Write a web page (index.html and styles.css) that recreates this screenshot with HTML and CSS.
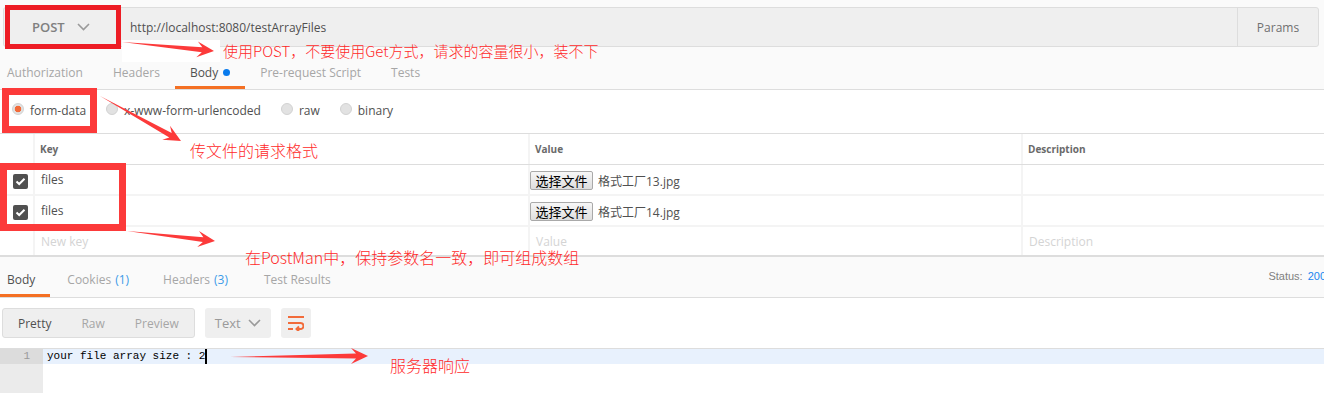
FILE: index.html
```html
<!DOCTYPE html>
<html lang="zh-CN">
<head>
    <meta charset="UTF-8">
    <meta name="viewport" content="width=device-width, initial-scale=1.0">
    <title>testArrayFiles</title>
    <link rel="stylesheet" href="styles.css">
</head>
<body>
    <!-- request url -->
    <div class="url-bar">
        <div class="method">POST
            <svg class="chevron" width="13" height="8" viewBox="0 0 13 8"><polyline points="1,1 6.5,6.5 12,1"/></svg>
        </div>
        <div class="url">http://localhost:8080/testArrayFiles</div>
        <div class="params">Params</div>
    </div>

    <div class="tabs req-tabs">
        <div class="tab first">Authorization</div>
        <div class="tab">Headers</div>
        <div class="tab active">Body <span class="dot"></span></div>
        <div class="tab">Pre-request Script</div>
        <div class="tab">Tests</div>
    </div>

    <div class="body-types">
        <div class="opt"><span class="radio checked"></span>form-data</div>
        <div class="opt"><span class="radio"></span>x-www-form-urlencoded</div>
        <div class="opt"><span class="radio"></span>raw</div>
        <div class="opt"><span class="radio"></span>binary</div>
    </div>

    <!-- form-data table -->
    <div class="kv">
        <div class="kv-row kv-head">
            <div class="cell check"></div>
            <div class="cell">Key</div>
            <div class="cell">Value</div>
            <div class="cell">Description</div>
        </div>
        <div class="kv-row">
            <div class="cell check"><span class="checkbox"><svg width="15" height="15" viewBox="0 0 15 15"><polyline points="3.5,7.5 6.2,10 11.5,4.8"/></svg></span></div>
            <div class="cell">files</div>
            <div class="cell value"><button class="file-btn">选择文件</button><span class="file-name">格式工厂13.jpg</span></div>
            <div class="cell"></div>
        </div>
        <div class="kv-row">
            <div class="cell check"><span class="checkbox"><svg width="15" height="15" viewBox="0 0 15 15"><polyline points="3.5,7.5 6.2,10 11.5,4.8"/></svg></span></div>
            <div class="cell">files</div>
            <div class="cell value"><button class="file-btn">选择文件</button><span class="file-name">格式工厂14.jpg</span></div>
            <div class="cell"></div>
        </div>
        <div class="kv-row">
            <div class="cell check"></div>
            <div class="cell placeholder">New key</div>
            <div class="cell placeholder">Value</div>
            <div class="cell placeholder">Description</div>
        </div>
    </div>

    <!-- response -->
    <div class="tabs res-tabs">
        <div class="tab first active">Body</div>
        <div class="tab">Cookies <span class="count">(1)</span></div>
        <div class="tab">Headers <span class="count">(3)</span></div>
        <div class="tab last">Test Results</div>
        <div class="status">Status: <span class="code">200</span></div>
    </div>

    <div class="res-toolbar">
        <div class="segmented">
            <span class="seg active">Pretty</span>
            <span class="seg">Raw</span>
            <span class="seg">Preview</span>
        </div>
        <div class="format">Text
            <svg class="chevron" width="13" height="8" viewBox="0 0 13 8"><polyline points="1,1 6.5,6.5 12,1"/></svg>
        </div>
        <div class="wrap-btn">
            <svg width="16" height="16" viewBox="0 0 16 16">
                <path d="M0 2 H16 M0 8 H12.5 A3 3 0 0 1 12.5 14 H8.5 M0 14 H5"/>
                <polyline points="11,11.5 8.5,14 11,16.5"/>
            </svg>
        </div>
    </div>

    <div class="editor">
        <div class="gutter"><div class="ln current">1</div></div>
        <div class="code"><div class="line current">your file array size : 2<span class="cursor"></span></div></div>
    </div>

    <!-- red notes drawn on the screenshot -->
    <div class="marks">
        <div class="patch"></div>
        <div class="box box-method"></div>
        <div class="box box-type"></div>
        <div class="box box-keys"></div>
        <svg class="arrows" width="1324" height="393">
            <polygon points="122,42 202.3,47.3 197.9,41.4 214,51 196.3,57.3 201.8,52.3"/>
            <polygon points="100,96 171.7,133 170,125.8 181,141 162.3,139.7 169.3,137.4"/>
            <polygon points="127,231 203.4,237.2 199,231.1 215,241 197.2,247 202.8,242.1"/>
            <polygon points="230,357 356,353.6 351,348.1 368,356 351,364.1 356,358.6"/>
        </svg>
        <div class="note note-1">使用POST，不要使用Get方式，请求的容量很小，装不下</div>
        <div class="note note-2">传文件的请求格式</div>
        <div class="note note-3">在PostMan中，保持参数名一致，即可组成数组</div>
        <div class="note note-4">服务器响应</div>
    </div>
</body>
</html>
```

FILE: styles.css
```css
body {
    margin: 0;
    width: 1324px;
    height: 393px;
    overflow: hidden;
    position: relative;
    background-color: #fafafa;
    font-family: "Open Sans", "Noto Sans CJK SC", sans-serif;
    font-size: 12px;
    color: #505050;
}

.chevron polyline {
    fill: none;
    stroke: #9a9a9a;
    stroke-width: 1.6;
}

/* url bar */
.url-bar {
    display: flex;
    height: 38px;
    margin: 7px 5px 0 3px;
    border: 1px solid #ddd;
    border-radius: 3px;
    background-color: #efefef;
}

.method {
    display: flex;
    align-items: center;
    gap: 12px;
    width: 116px;
    padding-left: 28px;
    box-sizing: border-box;
    font-size: 13px;
    font-weight: 600;
    color: #808080;
}

.url {
    flex: 1;
    display: flex;
    align-items: center;
    padding-left: 10px;
}

.params {
    width: 80px;
    display: flex;
    align-items: center;
    justify-content: center;
    border-left: 1px solid #ddd;
    color: #707070;
}

/* tabs */
.tabs {
    display: flex;
    border-bottom: 1px solid #ddd;
    background-color: #fafafa;
}

.req-tabs {
    height: 33px;
    padding-top: 9px;
}

.res-tabs {
    height: 36px;
    padding-top: 4px;
    border-top: 1px solid #ddd;
}

.tab {
    position: relative;
    display: flex;
    align-items: center;
    padding: 0 15px;
    color: #a6a6a6;
}

.res-tabs .tab {
    padding: 0 17px;
}

.res-tabs .tab.last {
    padding-left: 19px;
}

.tabs .tab.first {
    padding-left: 7px;
    padding-right: 15px;
}

.tab.active {
    color: #505050;
}

.tab.active::after {
    content: "";
    position: absolute;
    left: 0;
    right: 0;
    bottom: 0;
    height: 3px;
    background-color: #f47023;
}

.res-tabs .tab.first.active::after {
    left: -7px;
}

.dot {
    display: inline-block;
    width: 7px;
    height: 7px;
    margin-left: 5px;
    border-radius: 50%;
    background-color: #097bed;
}

.count {
    margin-left: 4px;
    color: #3d9ae8;
}

.status {
    margin-left: auto;
    margin-right: -2px;
    display: flex;
    align-items: center;
    padding-bottom: 6px;
    font-family: "Liberation Sans", Arial, sans-serif;
    font-size: 11px;
    color: #808080;
}

.status .code {
    margin-left: 5px;
    color: #1a86f0;
}

/* body type radios */
.body-types {
    display: flex;
    align-items: center;
    gap: 20px;
    height: 43px;
    padding-left: 12px;
    background-color: #fff;
}

.opt {
    display: flex;
    align-items: center;
    gap: 6px;
    margin-top: -3px;
}

.radio {
    width: 12px;
    height: 12px;
    margin-top: -3px;
    border-radius: 50%;
    box-sizing: border-box;
    border: 1px solid #d2d2d2;
    background-color: #e2e2e2;
}

.radio.checked {
    background: radial-gradient(circle, #f26b3a 0 3px, #e2e2e2 3.6px);
}

/* key / value table */
.kv {
    background-color: #fff;
    border-top: 1px solid #ddd;
    border-bottom: 1px solid #ddd;
}

.kv-row {
    display: grid;
    grid-template-columns: 33px 495px 493px 1fr;
    height: 29px;
    border-bottom: 2px solid #f4f4f4;
}

.kv-row:last-child {
    height: 28px;
    border-bottom: none;
}

.kv-head {
    height: 30px;
    border-bottom: 1px solid #ddd;
    font-size: 10px;
    font-weight: 700;
    color: #6a6a6a;
}

.cell {
    display: flex;
    align-items: center;
    padding-left: 6px;
    border-left: 2px solid #f4f4f4;
}

.kv-head .cell {
    padding-left: 5px;
}

.cell.check {
    border-left: none;
    padding-left: 13px;
}

.cell.value {
    padding-left: 0;
}

.placeholder {
    color: #d4d4d4;
}

.checkbox {
    width: 15px;
    height: 15px;
    margin-top: 3px;
    border-radius: 2px;
    background-color: #505050;
}

.checkbox svg {
    display: block;
}

.checkbox polyline {
    fill: none;
    stroke: #fff;
    stroke-width: 2;
}

.file-btn {
    height: 19px;
    width: 63px;
    margin-top: 2px;
    padding: 0;
    border: 1px solid #a9a9a9;
    border-radius: 2px;
    background: linear-gradient(#f7f7f7, #dedede);
    font-family: "Noto Sans CJK SC", sans-serif;
    font-size: 13px;
    line-height: 17px;
    color: #000;
}

.file-name {
    margin: 3px 0 0 5px;
}

/* response toolbar */
.res-toolbar {
    display: flex;
    gap: 10px;
    height: 40px;
    padding: 10px 0 0 2px;
    background-color: #fff;
}

.segmented {
    display: flex;
    height: 28px;
    border: 1px solid #ddd;
    border-radius: 3px;
    background-color: #efefef;
}

.seg {
    display: flex;
    align-items: center;
    padding: 0 15px;
    color: #a6a6a6;
}

.seg.active {
    color: #505050;
}

.format {
    display: flex;
    align-items: center;
    gap: 7px;
    height: 30px;
    padding: 0 10px;
    border-radius: 3px;
    background-color: #efefef;
    font-size: 13px;
    color: #9a9a9a;
}

.wrap-btn {
    display: flex;
    align-items: center;
    justify-content: center;
    width: 30px;
    height: 30px;
    border-radius: 3px;
    background-color: #efefef;
}

.wrap-btn path,
.wrap-btn polyline {
    fill: none;
    stroke: #f26b3a;
    stroke-width: 2;
}

/* editor */
.editor {
    display: flex;
    height: 46px;
    border-top: 1px solid #ddd;
    background-color: #fff;
    font-family: "Liberation Mono", monospace;
    font-size: 11px;
    line-height: 15px;
}

.gutter {
    width: 43px;
    background-color: #ebebeb;
}

.ln {
    padding-right: 13px;
    text-align: right;
    color: #999;
}

.ln.current {
    background-color: #dcdcdc;
}

.code {
    flex: 1;
}

.line {
    padding-left: 4px;
    color: #000;
}

.line.current {
    background-color: #e8f1fd;
}

.cursor {
    display: inline-block;
    width: 2px;
    height: 15px;
    vertical-align: top;
    background-color: #000;
}

/* annotation layer */
.marks {
    position: absolute;
    top: 0;
    left: 0;
    width: 100%;
    height: 100%;
    pointer-events: none;
}

.patch {
    position: absolute;
    left: 122px;
    top: 40px;
    width: 98px;
    height: 22px;
    background-color: #fff;
}

.box {
    position: absolute;
    box-sizing: border-box;
    border: 7px solid #fc3a3a;
}

.box-method {
    left: 5px;
    top: 5px;
    width: 116px;
    height: 44px;
    border-width: 5px;
    border-color: #ed1c24;
}

.box-type {
    left: 2px;
    top: 88px;
    width: 95px;
    height: 45px;
}

.box-keys {
    left: 0;
    top: 163px;
    width: 126px;
    height: 68px;
}

.arrows {
    position: absolute;
    top: 0;
    left: 0;
}

.arrows polygon {
    fill: #fc3a3a;
}

.note {
    position: absolute;
    font-family: "Noto Sans CJK SC", sans-serif;
    font-size: 16px;
    font-weight: 300;
    line-height: 16px;
    color: #ff2a2a;
    white-space: nowrap;
}

.note-1 {
    left: 223px;
    top: 43px;
    font-size: 15px;
    line-height: 15px;
}

.note-2 {
    left: 190px;
    top: 142px;
}

.note-3 {
    left: 245px;
    top: 249px;
}

.note-4 {
    left: 390px;
    top: 357px;
}
```
